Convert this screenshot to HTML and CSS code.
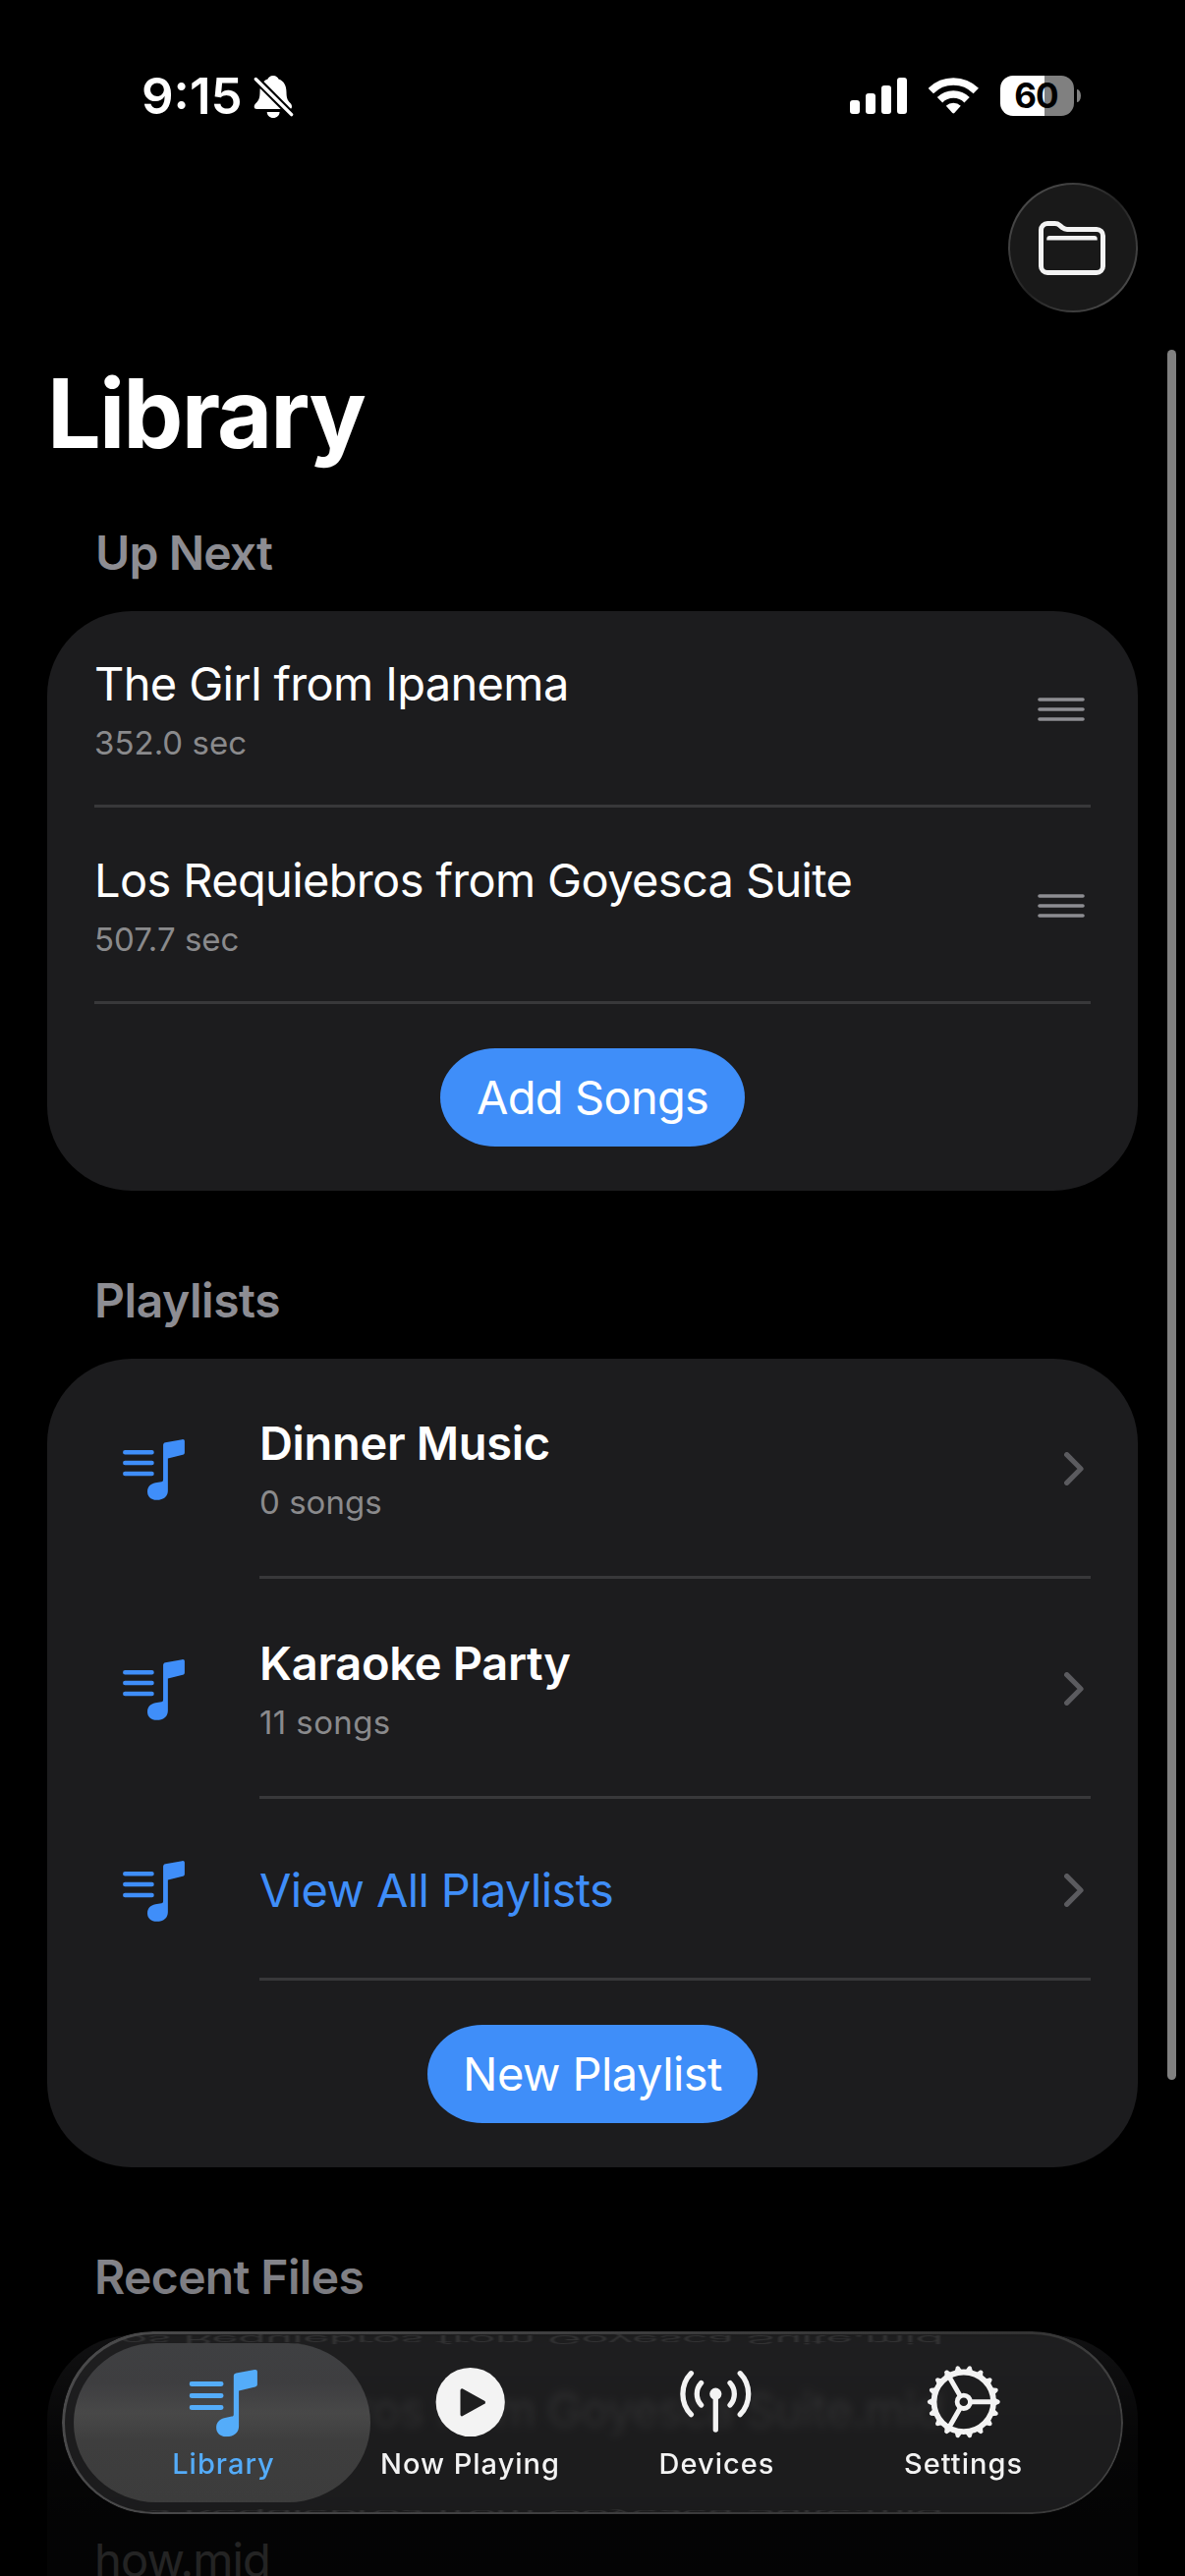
FILE: index.html
```html
<!DOCTYPE html>
<html lang="en">
<head>
<meta charset="utf-8">
<title>Library</title>
<link rel="stylesheet" href="styles.css">
</head>
<body>
<svg class="defs" aria-hidden="true">
  <symbol id="note" viewBox="12 12 69.5 68.3">
    <path d="M14.5 26.5H44.6M14.5 38.5H44.6M14.5 50.5H44.6" fill="none" stroke="currentColor" stroke-width="4.9" stroke-linecap="round"/>
    <path d="M57.3 18.6C57.3 17 58.2 16 59.8 15.6L78.6 12.1C80.4 11.8 81.4 12.6 81.4 14.2V26.8C81.4 28.2 80.7 29.1 79.3 29.4L62.6 33.4V69.5C62.6 76 57.6 80.2 50 80.2C43.8 80.2 39.6 76.4 39.6 70.9C39.6 65.6 43 62 48.6 60.9L55.4 59.6C56.8 59.3 57.3 58.7 57.3 57.4Z" fill="currentColor"/>
  </symbol>
  <symbol id="chevron" viewBox="0 0 20 34">
    <path d="M2.7 2.7L17 17L2.7 31.3" fill="none" stroke="currentColor" stroke-width="5.2" stroke-linecap="round" stroke-linejoin="round"/>
  </symbol>
  <symbol id="handle" viewBox="0 0 48 24">
    <path d="M2 2H46M2 12H46M2 22H46" fill="none" stroke="currentColor" stroke-width="3.6" stroke-linecap="round"/>
  </symbol>
</svg>

<div class="screen">
  <header class="status">
    <div class="status-left">
      <span class="time">9:15</span>
      <svg class="bell" viewBox="0 0 44 48">
        <path d="M22 2C25 2 27 4 27.5 5.5C33 7.5 35.5 12 35.5 19C35.5 25 37 27.5 39 29.5C40.5 31 41 32 41 33.5C41 35.3 40 36 38.3 36H5.5C3.7 36 2.7 35.3 2.7 33.5C2.7 32 3.5 31 5 29.5C7 27.5 8.5 25 8.5 19C8.5 12 11 7.5 16.5 5.5C17 4 19 2 22 2ZM15.7 39H28.6C28.4 42.5 25.8 45 22.1 45C18.5 45 15.9 42.5 15.7 39Z" fill="#fff"/>
        <path d="M2 3L43 44" stroke="#000" stroke-width="7.6"/>
        <path d="M4.3 5.5L40.7 41.6" stroke="#fff" stroke-width="3.4" stroke-linecap="round"/>
      </svg>
    </div>
    <div class="status-right">
      <svg class="signal" viewBox="0 0 58 37">
        <rect x="0" y="23" width="10" height="14" rx="3"/><rect x="16" y="16" width="10" height="21" rx="3"/><rect x="32" y="8" width="10" height="29" rx="3"/><rect x="48" y="0" width="10" height="37" rx="3"/>
      </svg>
      <svg class="wifi" viewBox="2 2 50.6 37">
        <g fill="none" stroke="#fff" stroke-width="7.6">
          <path d="M4.3 15.5A32.5 32.5 0 0 1 50.3 15.5"/>
          <path d="M13.5 24.7A19.5 19.5 0 0 1 41.1 24.7"/>
        </g>
        <path d="M19.8 30.8A10.7 10.7 0 0 1 34.8 30.8L28.3 38.1Q27.3 39 26.3 38.1Z" fill="#fff"/>
      </svg>
      <div class="battery"><span class="battery-body">60</span><span class="battery-nub"></span></div>
    </div>
  </header>

  <div class="toolbar">
    <button class="round" aria-label="Open folder">
      <svg class="folder" viewBox="0 0 68 55">
        <path d="M2.5 9A6.5 6.5 0 0 1 9 2.5H16.6C18.8 2.5 20 3 21.5 4.3L24 6.5C25.6 7.8 26.8 8.4 29 8.4H59A6.5 6.5 0 0 1 65.5 14.9V46A6.5 6.5 0 0 1 59 52.5H9A6.5 6.5 0 0 1 2.5 46Z" fill="none" stroke="#f3f3f3" stroke-width="5"/>
        <path d="M8.3 19.5V18Q8.3 15 11.3 15H56.7Q59.7 15 59.7 18V19.5Z" fill="#f3f3f3"/>
      </svg>
    </button>
  </div>

  <h1>Library</h1>

  <h2 class="first">Up Next</h2>
  <section class="card">
    <div class="row song">
      <div class="body">
        <div class="text"><div class="title">The Girl from Ipanema</div><div class="sub">352.0 sec</div></div>
        <svg class="handle"><use href="#handle"/></svg>
      </div>
    </div>
    <div class="row song">
      <div class="body">
        <div class="text"><div class="title">Los Requiebros from Goyesca Suite</div><div class="sub">507.7 sec</div></div>
        <svg class="handle"><use href="#handle"/></svg>
      </div>
    </div>
    <div class="action"><button class="pill add">Add Songs</button></div>
  </section>

  <h2 class="pl">Playlists</h2>
  <section class="card">
    <div class="row playlist">
      <svg class="note"><use href="#note"/></svg>
      <div class="body">
        <div class="text"><div class="title strong">Dinner Music</div><div class="sub">0 songs</div></div>
        <svg class="chevron"><use href="#chevron"/></svg>
      </div>
    </div>
    <div class="row playlist">
      <svg class="note"><use href="#note"/></svg>
      <div class="body">
        <div class="text"><div class="title strong">Karaoke Party</div><div class="sub wide">11 songs</div></div>
        <svg class="chevron"><use href="#chevron"/></svg>
      </div>
    </div>
    <div class="row playlist all">
      <svg class="note"><use href="#note"/></svg>
      <div class="body">
        <div class="text"><div class="title link">View All Playlists</div></div>
        <svg class="chevron"><use href="#chevron"/></svg>
      </div>
    </div>
    <div class="action"><button class="pill new">New Playlist</button></div>
  </section>

  <h2>Recent Files</h2>
  <section class="card recent">
    <div class="title">Los Requiebros from Goyesca Suite.mid</div>
    <div class="title tail">how.mid</div>
  </section>

  <div class="fade"></div>
  <div class="scrollbar"></div>

  <nav class="tabs">
    <span class="glint top" aria-hidden="true">Los Requiebros from Goyesca Suite.mid</span>
    <span class="glint bottom" aria-hidden="true">Los Requiebros from Goyesca Suite.mid</span>
    <a class="tab active">
      <svg viewBox="-13.5 0 120 90"><use href="#note" x="12" y="12" width="69.5" height="68.3"/></svg>
      <span>Library</span>
    </a>
    <a class="tab">
      <svg viewBox="0 0 120 90">
        <circle cx="60.7" cy="45" r="35.1" fill="#f3f3f3"/>
        <path d="M52.2 33L74.3 45.3L52.2 57.6Z" fill="#1e1e1f" stroke="#1e1e1f" stroke-width="3.4" stroke-linejoin="round"/>
      </svg>
      <span>Now Playing</span>
    </a>
    <a class="tab">
      <svg viewBox="0 0 120 90">
        <g fill="none" stroke="currentColor" stroke-width="5.3" stroke-linecap="round">
          <path d="M34.4 15.7A30.2 30.2 0 0 0 34.4 57.7"/>
          <path d="M84.2 15.7A30.2 30.2 0 0 1 84.2 57.7"/>
          <path d="M44.6 25.5A16.7 16.7 0 0 0 44.6 48"/>
          <path d="M74 25.5A16.7 16.7 0 0 1 74 48"/>
          <path d="M59.3 38V73"/>
        </g>
        <circle cx="59.3" cy="36.7" r="6.1" fill="currentColor"/>
      </svg>
      <span>Devices</span>
    </a>
    <a class="tab">
      <svg viewBox="-60.8 -44.8 120 90">
        <g fill="none" stroke="currentColor">
          <circle r="30.3" stroke-width="5.8"/>
          <circle r="6.7" stroke-width="4.8"/>
          <path d="M8 0H29M-4 -6.9L-14.5 -25.1M-4 6.9L-14.5 25.1" stroke-width="5"/>
        </g>
        <g fill="currentColor">
          <g id="third">
            <path id="tooth" d="M31 -4.2L36.2 -1.7Q37.9 0 36.2 1.7L31 4.2Z"/>
            <use href="#tooth" transform="rotate(20)"/><use href="#tooth" transform="rotate(40)"/>
            <use href="#tooth" transform="rotate(60)"/><use href="#tooth" transform="rotate(80)"/><use href="#tooth" transform="rotate(100)"/>
          </g>
          <use href="#third" transform="rotate(120)"/><use href="#third" transform="rotate(240)"/>
        </g>
      </svg>
      <span>Settings</span>
    </a>
  </nav>
</div>
</body>
</html>
```
FILE: styles.css
```css
* { box-sizing: border-box; margin: 0; padding: 0; }
html, body { background: #000; }
body { font-family: Inter, "Liberation Sans", sans-serif; color: #fff; }
button { font: inherit; color: inherit; border: 0; }
svg { display: block; flex: none; }
.defs { position: absolute; width: 0; height: 0; }

.screen {
  position: relative;
  width: 1206px;
  height: 2622px;
  overflow: hidden;
  background: #000;
  display: flex;
  flex-direction: column;
}
.screen > * { flex-shrink: 0; }

/* Status bar */
.status {
  height: 186px;
  padding: 67px 106px 0 144px;
  display: flex;
  justify-content: space-between;
  align-items: flex-start;
}
.status-left, .status-right { display: flex; align-items: center; height: 61px; }
.time { width: 112px; font-size: 51px; line-height: 61px; font-weight: 600; white-space: nowrap; letter-spacing: 0; }
.bell { width: 44px; height: 48px; margin-top: 3px; }
.signal { width: 58px; height: 37px; fill: #fff; margin-right: 22px; }
.wifi { width: 50.6px; height: 37px; margin-right: 22.4px; }
.battery { display: flex; align-items: center; gap: 3px; }
.battery-body {
  width: 75px; height: 41px; border-radius: 13px; padding-right: 2px;
  background: linear-gradient(90deg, #fff 45px, #808080 45px);
  color: #000; font-size: 35px; line-height: 41px; font-weight: 700;
  text-align: center; letter-spacing: -1px;
}
.battery-nub { width: 4px; height: 13px; background: #808080; border-radius: 0 4px 4px 0 / 0 7px 7px 0; }

/* Toolbar */
.toolbar { height: 132px; padding-right: 48px; display: flex; justify-content: flex-end; }
.round {
  width: 132px; height: 132px; border-radius: 50%;
  border: 2.5px solid transparent;
  background:
    linear-gradient(#191919, #191919) padding-box,
    linear-gradient(135deg, #4c4c4c 10%, #3a3a3a 30%, #222 50%, #3a3a3a 70%, #4c4c4c 90%) border-box;
  display: flex; align-items: center; justify-content: center;
}
.folder { width: 68px; height: 55px; margin: 1px 2px 0 0; }

h1 { margin: 45px 0 0 48px; font-size: 97px; line-height: 116px; font-weight: 700; letter-spacing: -1.88px; }
h2 { padding: 83px 0 30px 96px; height: 171px; font-size: 48px; line-height: 58px; font-weight: 600; letter-spacing: -.64px; color: #8d8d93; }
h2.first { padding: 55px 0 30px 97px; height: 143px; letter-spacing: -.88px; }
h2.pl { letter-spacing: -.44px; }

/* Cards */
.card { margin: 0 48px; border-radius: 86px; background: #1c1c1e; overflow: hidden; }
.row { display: flex; padding: 0 48px; }
.song { height: 200px; }
.playlist { height: 224px; align-items: center; }
.playlist.all { height: 185px; }
.body {
  flex: 1; align-self: stretch;
  display: flex; align-items: center; justify-content: space-between;
  border-bottom: 3px solid #38383a;
  padding-top: 3px;
}
.text { display: flex; flex-direction: column; gap: 12px; margin-top: -2px; }
.title { font-size: 47px; line-height: 57px; letter-spacing: -.64px; white-space: nowrap; }
.title.strong { font-weight: 600; letter-spacing: -.32px; }
.title.link { color: #3f8ef9; letter-spacing: -.63px; margin-top: 2px; }
.sub { font-size: 33px; line-height: 40px; color: #8a8a8c; letter-spacing: .02px; }
.sub.wide { letter-spacing: .4px; }
.handle { width: 48px; height: 24px; color: #8d8d92; margin-right: 6px; }
.note { width: 63px; height: 62px; margin: 2px 76px 0 29px; color: #3f8ef9; }
.chevron { width: 20px; height: 34px; margin-right: 7px; color: #5b5b5f; }
.action { height: 190px; display: flex; align-items: center; justify-content: center; }
.pill {
  height: 100px; border-radius: 56px / 50px; background: #3f8ef9;
  font-size: 47px; line-height: 100px; text-align: center;
}
.pill.add { width: 310px; letter-spacing: -.77px; }
.pill.new { width: 336px; letter-spacing: -.54px; }

.recent { height: 400px; padding: 47px 48px; display: flex; flex-direction: column; }
.recent .tail { margin-top: 96px; letter-spacing: -.87px; }

/* Overlays */
.fade {
  position: absolute; left: 0; right: 0; top: 2262px; bottom: 0;
  background: linear-gradient(rgba(0,0,0,0), rgba(0,0,0,.12) 70px, rgba(0,0,0,.42) 118px, rgba(0,0,0,.78) 220px, rgba(0,0,0,.86) 300px);
}
.scrollbar { position: absolute; left: 1188px; top: 356px; width: 9px; height: 1761px; border-radius: 5px; background: #808080; }

.tabs {
  position: absolute; left: 63px; top: 2373px; width: 1080px; height: 186px;
  border-radius: 93px; padding: 0 38px; overflow: hidden;
  display: flex;
  background: rgba(36, 36, 37, .76);
  backdrop-filter: blur(4px);
}
.tabs::after {
  content: ""; position: absolute; inset: 0; border-radius: 93px; padding: 2.5px;
  background: linear-gradient(100deg, #4a4a4b, #3e3e3f 50%, #333 88%, #444);
  mask: linear-gradient(#000 0 0) content-box exclude, linear-gradient(#000 0 0);
}
.tab {
  position: relative; width: 251px; padding-top: 27px;
  display: flex; flex-direction: column; align-items: center; color: #f3f3f3;
}
.tab svg, .tab span { position: relative; }
.tab svg { width: 120px; height: 90px; }
.tab span { padding-left: 2px; font-size: 29px; line-height: 36px; font-weight: 550; letter-spacing: 1px; white-space: nowrap; }
.tab.active { color: #54acf9; }
.tab.active::before {
  content: ""; position: absolute; left: -26px; top: 12px; width: 302px; height: 162px; border-radius: 84px / 81px;
  background: linear-gradient(#3f4042, #3e3e40 25%, #484848 44%, #3e3e3e 62%, #3c3c3c);
}
.glint {
  position: absolute; left: 33px; font-size: 47px; line-height: 57px; letter-spacing: -.64px;
  color: #323233; white-space: nowrap; filter: blur(1px);
}
.glint.top { top: -20px; transform: scaleY(-.24); }
.glint.bottom { top: 156px; transform: scaleY(-.12); }
```
